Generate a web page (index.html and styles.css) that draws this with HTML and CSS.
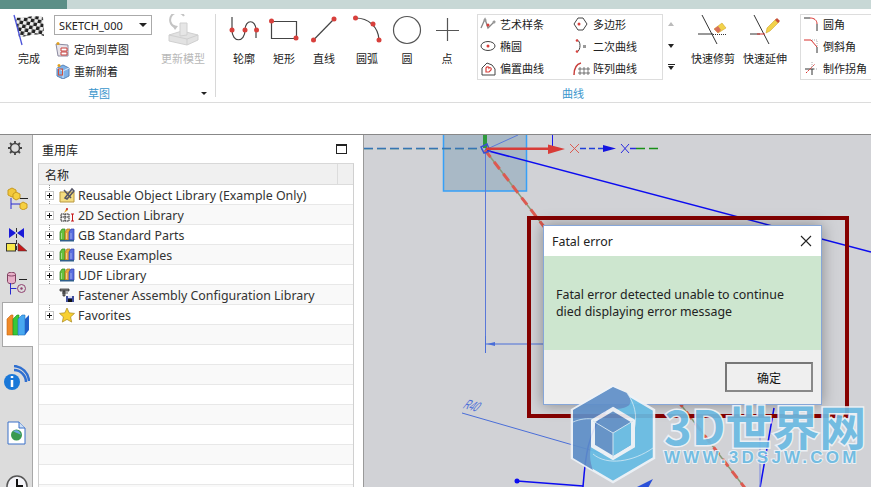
FILE: index.html
```html
<!DOCTYPE html>
<html lang="en">
<head>
    <meta charset="UTF-8">
    <meta name="viewport" content="width=device-width, initial-scale=1.0">
    <title>Fatal error</title>
    <link rel="stylesheet" href="styles.css">
</head>
<body>
    <svg class="defs" width="0" height="0">
        <pattern id="check" width="7" height="7" patternUnits="userSpaceOnUse" patternTransform="rotate(8) skewX(-6)">
            <rect width="7" height="7" fill="#eee"/>
            <rect width="3.500" height="3.500" fill="#222"/>
            <rect x="3.500" y="3.500" width="3.500" height="3.500" fill="#222"/>
        </pattern>
        <symbol id="books" viewBox="0 0 16 16">
            <path d="M1 5l2-3h3v11H1z" fill="#66c23c" stroke="#2f7f1c" stroke-width=".7"/>
            <path d="M6 5l2-3h3v11H6z" fill="#e8a83c" stroke="#a8741a" stroke-width=".7"/>
            <path d="M10 5l2-3h3v11h-5z" fill="#5b6fe0" stroke="#2f3da8" stroke-width=".7"/>
            <path d="M1 13h14v1.500H1z" fill="#2f5f8c"/>
            <path d="M2.500 6v6M7.500 6v6M12 6v6" stroke="#fff" stroke-width=".6" opacity=".7"/>
        </symbol>
        <symbol id="plus" viewBox="0 0 9 9">
            <rect x=".5" y=".5" width="8" height="8" fill="#fff" stroke="#c8c8c8"/>
            <path d="M2 4.500h5M4.500 2v5" stroke="#111"/>
        </symbol>
    </svg>

    <div class="top-strip"><div class="top-tab"></div></div>

    <div class="ribbon">
        <div class="group group-sketch">
            <div class="group-body">
                <div class="tool tool-flag">
                    <svg width="50" height="36" viewBox="4 14 50 36">
                        <path d="M15 17c8 3 13-3 28 0l1 19c-11-4-17 1-25 1z" fill="url(#check)"/>
                        <path d="M14 15l8 30" stroke="#4a52d8" stroke-width="1.300"/>
                    </svg>
                    <span>完成</span>
                </div>
                <div class="sketch-col">
                    <div class="select"><span>SKETCH_000</span><i class="caret"></i></div>
                    <div class="link-row">
                        <svg width="16" height="16" viewBox="0 0 16 16">
                            <path d="M1 3l12 1v11H3z" fill="#e8e4ea" stroke="#8a8aa0"/>
                            <path d="M6 7h6v3H6zM6 11h6v3H6z" fill="#fff" stroke="#c8403c"/>
                            <circle cx="3" cy="2.500" r="1.500" fill="#e0a020"/>
                        </svg>
                        <span>定向到草图</span>
                    </div>
                    <div class="link-row">
                        <svg width="16" height="16" viewBox="0 0 16 16">
                            <path d="M8 2l6 3v8l-6 3-6-3V5z" fill="#7fb2e8" stroke="#5a84b8"/>
                            <path d="M2 5l6 3 6-3M8 8v7" stroke="#dfeaf6" fill="none"/>
                            <rect x="3.500" y="6" width="4" height="6" fill="none" stroke="#d0503c"/>
                            <circle cx="4" cy="2.500" r="1.500" fill="#e0a020"/>
                        </svg>
                        <span>重新附着</span>
                    </div>
                </div>
                <div class="tool tool-update is-off">
                    <svg width="62" height="36" viewBox="152 14 62 36">
                        <path d="M169 35l13-4 16 4v5l-11 5-18-4z" fill="#e2e2e2" stroke="#d0d0d0"/>
                        <path d="M169 35l18 4 11-4M187 39v6" fill="none" stroke="#cfcfcf"/>
                        <path d="M180 23h7v12l-7 1z" fill="#e6e6e6" stroke="#d0d0d0"/>
                        <path d="M175 27a7.500 7.500 0 1 1 9-11" fill="none" stroke="#c4c4c4" stroke-width="2"/>
                        <path d="M172 25l6 1-3 4z" fill="#c4c4c4"/>
                    </svg>
                    <span>更新模型</span>
                </div>
            </div>
            <div class="group-foot">
                <div class="group-label label-sketch">草图</div>
                <i class="caret caret-small"></i>
            </div>
        </div>
        <div class="divider"></div>

        <div class="group">
            <div class="group-body body-curve">
                <div class="tool">
                    <svg width="40" height="36" viewBox="224 14 40 36">
                        <path d="M232 17v13c0 13 13 13 13 0 0-11 11-11 11 0v8" fill="none" stroke="#444" stroke-width="1.200"/>
                        <circle cx="232" cy="30" r="2.500" fill="#d8403c"/><circle cx="245" cy="30" r="2.500" fill="#d8403c"/><circle cx="256.500" cy="30" r="2.500" fill="#d8403c"/>
                    </svg>
                    <span>轮廓</span>
                </div>
                <div class="tool">
                    <svg width="40" height="36" viewBox="264 14 40 36">
                        <path d="M271.500 21.500h25v17h-25z" fill="none" stroke="#444" stroke-width="1.200"/>
                        <circle cx="271.500" cy="21" r="2.500" fill="#d8403c"/><circle cx="296" cy="38" r="2.500" fill="#d8403c"/>
                    </svg>
                    <span>矩形</span>
                </div>
                <div class="tool">
                    <svg width="40" height="36" viewBox="304 14 40 36">
                        <path d="M313.500 40l20.500-21" stroke="#444" stroke-width="1.200"/>
                        <circle cx="313.500" cy="40" r="2.500" fill="#d8403c"/><circle cx="334" cy="19" r="2.500" fill="#d8403c"/>
                    </svg>
                    <span>直线</span>
                </div>
                <div class="tool tool-arc">
                    <svg width="40" height="36" viewBox="347 14 40 36">
                        <path d="M355.500 18c13 0 23 9 23.500 22" fill="none" stroke="#444" stroke-width="1.200"/>
                        <circle cx="355.500" cy="18" r="2.500" fill="#d8403c"/><circle cx="373" cy="24" r="2.500" fill="#d8403c"/><circle cx="379" cy="40" r="2.500" fill="#d8403c"/>
                    </svg>
                    <span>圆弧</span>
                </div>
                <div class="tool">
                    <svg width="40" height="36" viewBox="387 14 40 36">
                        <circle cx="407" cy="30" r="13.500" fill="none" stroke="#555" stroke-width="1.200"/>
                    </svg>
                    <span>圆</span>
                </div>
                <div class="tool">
                    <svg width="40" height="36" viewBox="427 14 40 36">
                        <path d="M436 30.500h23M447.500 18v23" stroke="#555" stroke-width="1.200"/>
                    </svg>
                    <span>点</span>
                </div>

                <div class="gallery">
                    <div class="gallery-item">
                        <svg width="17" height="16" viewBox="0 0 17 16">
                            <path d="M1 12L5 3l3 9 7-7" fill="none" stroke="#888" stroke-width="1.300"/>
                            <circle cx="5" cy="4" r="1.500" fill="#999"/><circle cx="8" cy="9" r="1.500" fill="#d8403c"/><circle cx="14" cy="6" r="1.500" fill="#999"/>
                        </svg>
                        <span>艺术样条</span>
                    </div>
                    <div class="gallery-item">
                        <svg width="17" height="16" viewBox="0 0 17 16">
                            <path d="M5 2h5l4 6-4 6H5L1 8z" fill="none" stroke="#444"/>
                            <circle cx="6" cy="8" r="1.500" fill="#d8403c"/>
                        </svg>
                        <span>多边形</span>
                    </div>
                    <div class="gallery-item">
                        <svg width="17" height="16" viewBox="0 0 17 16">
                            <ellipse cx="8" cy="8" rx="7" ry="4.500" fill="none" stroke="#444"/>
                            <circle cx="8" cy="8" r="1.500" fill="#d8403c"/>
                        </svg>
                        <span>椭圆</span>
                    </div>
                    <div class="gallery-item">
                        <svg width="17" height="16" viewBox="0 0 17 16">
                            <path d="M4 2c4 1 4 10 0 12" fill="none" stroke="#444"/>
                            <circle cx="4" cy="2.500" r="1.300" fill="#d8403c"/><circle cx="4" cy="13.500" r="1.300" fill="#d8403c"/>
                            <rect x="10" y="7" width="3" height="3" fill="#999"/>
                        </svg>
                        <span>二次曲线</span>
                    </div>
                    <div class="gallery-item">
                        <svg width="17" height="16" viewBox="0 0 17 16">
                            <path d="M2 15V8l5-5 5 2 3 4v6z" fill="none" stroke="#444"/>
                            <path d="M6 12V8c1-2 3-1 3 0 1-1 3 0 2 2l-2 2z" fill="none" stroke="#d8403c" stroke-width="1.200"/>
                        </svg>
                        <span>偏置曲线</span>
                    </div>
                    <div class="gallery-item">
                        <svg width="17" height="16" viewBox="0 0 17 16">
                            <path d="M1 15C1 8 4 4 8 3" fill="none" stroke="#c8403c" stroke-width="1.500"/>
                            <path d="M6 8h2v2H6zM10 8h2v2h-2zM6 12h2v2H6zM10 12h2v2h-2zM14 8h2v2h-2zM14 12h2v2h-2z" fill="none" stroke="#555" stroke-width=".8"/>
                        </svg>
                        <span>阵列曲线</span>
                    </div>
                </div>
                <div class="gallery-scroll">
                    <i class="scroll-btn is-up"></i>
                    <i class="scroll-btn"></i>
                    <i class="scroll-btn is-more"></i>
                </div>

                <div class="tool tool-fast">
                    <svg width="52" height="36" viewBox="687 14 52 36">
                        <path d="M702 15l15 29M698 34h15" stroke="#333" fill="none"/>
                        <path d="M713 34.500h14" stroke="#333" stroke-dasharray="1 1"/>
                        <path d="M714 29l8-6 4 5-8 5z" fill="#f2d24a" stroke="#c89a20" stroke-width=".5"/>
                        <path d="M714 29l4-3 3 4-3 3z" fill="#d8705c"/>
                    </svg>
                    <span>快速修剪</span>
                </div>
                <div class="tool tool-fast">
                    <svg width="52" height="36" viewBox="739 14 52 36">
                        <path d="M754 15l15 29M750 34h10" stroke="#333" fill="none"/>
                        <path d="M757 34h8" stroke="#d8302c"/>
                        <path d="M766 33l1-5 9-9 3 3-9 9z" fill="#f2d24a" stroke="#c89a20" stroke-width=".5"/>
                        <path d="M775 20l2-2 3 3-2 2z" fill="#c8503c"/>
                    </svg>
                    <span>快速延伸</span>
                </div>

                <div class="corner-box">
                    <div class="gallery-item">
                        <svg width="17" height="16" viewBox="0 0 17 16">
                            <path d="M1 2h6" stroke="#333"/>
                            <path d="M7 2c4 0 7 2 7 6" fill="none" stroke="#d8302c"/>
                            <path d="M14 8v7" stroke="#333"/>
                        </svg>
                        <span>圆角</span>
                    </div>
                    <div class="gallery-item">
                        <svg width="17" height="16" viewBox="0 0 17 16">
                            <path d="M1 2h7" stroke="#d8302c"/>
                            <path d="M8 2l6 7" stroke="#d8302c"/>
                            <path d="M14 9v6" stroke="#333"/>
                            <path d="M9 2h5v6" fill="none" stroke="#aaa" stroke-dasharray="1 1"/>
                        </svg>
                        <span>倒斜角</span>
                    </div>
                    <div class="gallery-item">
                        <svg width="17" height="16" viewBox="0 0 17 16">
                            <path d="M2 9h9M9 9v6" stroke="#333"/>
                            <path d="M3 13l9-9" stroke="#d8302c" stroke-dasharray="2 1"/>
                            <path d="M11 9h4M9 2v6" stroke="#aaa" stroke-dasharray="1 1"/>
                        </svg>
                        <span>制作拐角</span>
                    </div>
                </div>
            </div>
            <div class="group-foot">
                <div class="group-label label-curve">曲线</div>
            </div>
        </div>
    </div>
    <div class="sub-bar"></div>

    <div class="main">
        <div class="side-tabs">
            <div class="tab tab-gear">
                <svg width="16" height="16" viewBox="0 0 16 16">
                    <circle cx="8" cy="8" r="4.500" fill="none" stroke="#444" stroke-width="1.500"/>
                    <path d="M8 1v3M8 12v3M1 8h3M12 8h3M3 3l2 2M11 11l2 2M13 3l-2 2M5 11l-2 2" stroke="#444" stroke-width="1.800"/>
                </svg>
            </div>
            <div class="tab tab-parts">
                <svg width="22" height="23" viewBox="0 0 22 23">
                    <path d="M1 3l4-2 4 2v5L5 10 1 8z" fill="#f2c83c" stroke="#c89a20"/>
                    <path d="M6 7l3-2 4 2v4l-4 2-3-2z" fill="#f6d040" stroke="#c89a20"/>
                    <path d="M13 17l3-2 4 2v4l-4 2-3-2z" fill="#f6d040" stroke="#c89a20"/>
                    <path d="M4 11v11M4 17h9" stroke="#2a2ad0"/>
                    <path d="M13 11.500h8" stroke="#222"/>
                </svg>
            </div>
            <div class="tab tab-constraint">
                <svg width="22" height="24" viewBox="0 0 22 24">
                    <path d="M3 0l7 5-7 5zM18 0l-7 5 7 5z" fill="#1a1ad8"/>
                    <rect x=".5" y="15.500" width="9" height="7.500" fill="#f8e848" stroke="#333"/>
                    <path d="M12 15l9 8h-9z" fill="#c81818" stroke="#333" stroke-width=".5"/>
                    <path d="M10.500 0v23" stroke="#333" stroke-dasharray="4 2"/>
                </svg>
            </div>
            <div class="tab tab-db">
                <svg width="22" height="23" viewBox="0 0 22 23">
                    <path d="M1.500 2.500c0-3 8-3 8 0v7c0 3-8 3-8 0z" fill="#e8b0c8" stroke="#804060"/>
                    <path d="M1.500 2.500c0 2 8 2 8 0" fill="none" stroke="#804060"/>
                    <path d="M4.500 11v11.500M4.500 16.500h6" stroke="#2a2ad0"/>
                    <path d="M13 7.500h8" stroke="#222"/>
                    <circle cx="15.500" cy="16.500" r="4" fill="none" stroke="#904070"/>
                    <circle cx="15.500" cy="16.500" r="1.200" fill="#904070"/>
                </svg>
            </div>
            <div class="tab tab-active">
                <svg width="24" height="22" viewBox="0 0 24 22">
                    <path d="M1 5l4-4h2v20H1z" fill="#f08a28" stroke="#c86410" stroke-width=".6"/>
                    <path d="M7 5l4-4h2v20H7z" fill="#38c838" stroke="#1c8c1c" stroke-width=".6"/>
                    <path d="M12 5l4-4h3v20h-7z" fill="#48a8f0" stroke="#2070c0" stroke-width=".6"/>
                    <path d="M19 21l4-5V1l-4 4z" fill="#2060c8"/>
                </svg>
            </div>
            <div class="tab tab-info">
                <svg width="26" height="26" viewBox="0 0 26 26">
                    <path d="M10 5a12 12 0 0 1 12 12" fill="none" stroke="#2f6fd0" stroke-width="2.500"/>
                    <path d="M10 1a16 16 0 0 1 15 15" fill="none" stroke="#2f6fd0" stroke-width="2.500"/>
                    <circle cx="8" cy="17" r="8" fill="#1a78d8"/>
                    <path d="M8 11v2M8 15v7" stroke="#fff" stroke-width="2.500"/>
                </svg>
            </div>
            <div class="tab tab-web">
                <svg width="20" height="24" viewBox="0 0 20 24">
                    <path d="M1 1h11l6 6v16H1z" fill="#fff" stroke="#3a70c8"/>
                    <path d="M12 1v6h6" fill="#cfe0f4" stroke="#3a70c8"/>
                    <circle cx="9.500" cy="14" r="5.500" fill="#3a9a50"/>
                    <path d="M6 10c4-2 7 0 8 4-3-2-5-2-8-4z" fill="#6aa8e0"/>
                </svg>
            </div>
            <div class="tab tab-clock">
                <svg width="22" height="22" viewBox="0 0 22 22">
                    <circle cx="11" cy="11" r="10" fill="#f4f4f8" stroke="#555" stroke-width="1.500"/>
                    <path d="M11 4v7h6" fill="none" stroke="#111" stroke-width="2"/>
                </svg>
            </div>
        </div>

        <div class="panel">
            <div class="panel-title">
                <span>重用库</span>
                <i class="max-btn"></i>
            </div>
            <div class="lib-table">
                <div class="lib-head">
                    <div class="lib-head-name">名称</div>
                    <div class="lib-head-end"></div>
                </div>
                <div class="tree-rows">
                    <div class="tree-line"></div>
                    <div class="lib-row">
                        <svg class="expander"><use href="#plus"/></svg>
                        <svg class="lib-icon" viewBox="0 0 16 16">
                            <path d="M1 5h14v10H1z" fill="#f4dc80" stroke="#b89840"/>
                            <path d="M6 11l7-9 2 2-7 8zM5 3l7 8" stroke="#556" stroke-width="1.500" fill="none"/>
                        </svg>
                        <span>Reusable Object Library (Example Only)</span>
                    </div>
                    <div class="lib-row">
                        <svg class="expander"><use href="#plus"/></svg>
                        <svg class="lib-icon" viewBox="0 0 16 16">
                            <path d="M2 7h8v7H2zM6 7v7M2 10h8" fill="none" stroke="#222" stroke-dasharray="1.500 .5"/>
                            <path d="M12 7h3M12 14h3M13.500 7v7" stroke="#c81818"/>
                            <path d="M5 6l2-4 2 1z" fill="#e0a020"/><circle cx="8" cy="2" r="1" fill="#c81818"/>
                        </svg>
                        <span>2D Section Library</span>
                    </div>
                    <div class="lib-row">
                        <svg class="expander"><use href="#plus"/></svg>
                        <svg class="lib-icon"><use href="#books"/></svg>
                        <span>GB Standard Parts</span>
                    </div>
                    <div class="lib-row">
                        <svg class="expander"><use href="#plus"/></svg>
                        <svg class="lib-icon"><use href="#books"/></svg>
                        <span>Reuse Examples</span>
                    </div>
                    <div class="lib-row">
                        <svg class="expander"><use href="#plus"/></svg>
                        <svg class="lib-icon"><use href="#books"/></svg>
                        <span>UDF Library</span>
                    </div>
                    <div class="lib-row">
                        <svg class="expander is-empty"></svg>
                        <svg class="lib-icon" viewBox="0 0 16 16">
                            <path d="M1 2h9v2H1zM4 4h2v5H4zM3 6h6" fill="#888" stroke="#222" stroke-width=".7"/>
                            <path d="M7 9h8v6H7z" fill="#3c4c9c"/><path d="M9 9h4v2H9z" fill="#dde"/><path d="M9 12h4v3H9z" fill="#111"/>
                        </svg>
                        <span>Fastener Assembly Configuration Library</span>
                    </div>
                    <div class="lib-row">
                        <svg class="expander"><use href="#plus"/></svg>
                        <svg class="lib-icon" viewBox="0 0 16 16">
                            <path d="M8 1l2.200 4.800 5.300.6-3.900 3.500 1.100 5.200L8 12.400l-4.700 2.700 1.100-5.200L.5 6.400l5.300-.6z" fill="#f8d030" stroke="#a88820" stroke-width=".7"/>
                        </svg>
                        <span>Favorites</span>
                    </div>
                    <div class="lib-row"></div><div class="lib-row"></div><div class="lib-row"></div>
                    <div class="lib-row"></div><div class="lib-row"></div><div class="lib-row"></div>
                    <div class="lib-row"></div><div class="lib-row"></div><div class="lib-row"></div>
                </div>
            </div>
        </div>

        <div class="canvas">
            <svg class="drawing" width="508" height="352" viewBox="363 135 508 352">
                <rect x="443.500" y="130" width="83" height="61" fill="#a9b9c6" stroke="#36a0f8" stroke-width="1.500"/>
                <path d="M485 150l33-15" stroke="#5a7ad8"/>
                <path d="M552.500 135v15" stroke="#1a1af0"/>
                <path d="M485.500 148v204" stroke="#5a78d8"/>
                <path d="M485 150L871 252" stroke="#0c0cf0" stroke-width="1.500"/>
                <path d="M364 148.500h118" stroke="#2a6ac8" stroke-width="1.500" stroke-dasharray="9 4"/>
                <path d="M364 149h118" stroke="#5a9a70" stroke-width="1" stroke-dasharray="9 4" opacity=".5"/>
                <path d="M485 135v13" stroke="#2e9a3c" stroke-width="4"/>
                <path d="M485 150L748 492" stroke="#8a9a78" stroke-width="1.500"/>
                <path d="M485 150L748 492" stroke="#dc5a50" stroke-width="3" stroke-dasharray="9 6"/>
                <path d="M481 147l6-3 3 7-6 2z" fill="none" stroke="#3a50d0" stroke-width="1.500"/>
                <path d="M486 147.500h62v-3l17 4.500-17 5v-4h-62z" fill="#d83c38"/>
                <path d="M570 144l9 9M579 144l-9 9" stroke="#dc5a50"/>
                <path d="M580 148.500h23" stroke="#2040d8" stroke-width="1.500" stroke-dasharray="6 3"/>
                <path d="M603 145l13 3.500-13 3.500z" fill="#1414e0"/>
                <path d="M621 144l8 9M629 144l-8 9" stroke="#2a2ae0"/>
                <path d="M630 148.500h6" stroke="#2a2ae0" stroke-width="1.500"/>
                <path d="M636 148.500h24" stroke="#189018" stroke-width="1.500" stroke-dasharray="9 4"/>

                <path d="M485.500 336v17M486 344h60" stroke="#4a6ed8"/>
                <path d="M487 344l8-2v4z" fill="#4a6ed8"/>
                <path d="M462 413l142 41" stroke="#4a6ed8"/>
                <text class="dim-text" transform="translate(462 408) rotate(14) skewX(-25) scale(.72 1.300)">R40</text>
                <path d="M517 481l66 5" stroke="#0c0cf0" stroke-width="1.500"/>
                <circle cx="517" cy="481" r="2.500" fill="#0c0cf0"/>
                <path d="M583 487c2-26 4-56 23-76" fill="none" stroke="#0c0cf0" stroke-width="1.500"/>
                <path d="M774 408l-14 80" stroke="#0c0cf0" stroke-width="1.500"/>
                <path d="M760 430v57" stroke="#7a8ae0"/>
                <path d="M635 488l18-9-5 9z" fill="#2a50d8"/>
            </svg>

            <div class="highlight-frame"></div>

            <div class="dialog">
                <div class="dialog-title">
                    <span>Fatal error</span>
                    <svg class="dialog-close" width="12" height="12" viewBox="0 0 12 12">
                        <path d="M1 1l10 10M11 1L1 11" stroke="#222" stroke-width="1.100"/>
                    </svg>
                </div>
                <div class="dialog-body">
                    Fatal error detected unable to continue<br>died displaying error message
                </div>
                <div class="dialog-foot">
                    <button class="dialog-btn">确定</button>
                </div>
            </div>

            <div class="watermark">
                <svg class="wm-logo" width="88" height="100" viewBox="0 0 88 100">
                    <path d="M44 2l41 24v48L44 98 3 74V26z" fill="#66bce4" stroke="#eef3f8" stroke-width="2.500"/>
                    <path d="M44 3L4 26v48l20 12C18 70 20 50 44 25c16 0 22-5 14-16z" fill="#5f8fc8"/>
                    <path d="M4 38c14-6 30-4 42 8M24 70c14 12 40 8 60-6M58 9c10 14 12 30 2 50" fill="none" stroke="#d8ecf6" stroke-width=".8"/>
                    <path d="M44 25l20 12v25L44 74 24 62V37z" fill="#5f8fc6" stroke="#eef3f8" stroke-width="4"/>
                    <path d="M44 49l18-11v23L44 72z" fill="#66bce4"/>
                    <path d="M24 37l20 12 20-12M44 49v25" fill="none" stroke="#cfe4f2"/>
                </svg>
                <div class="wm-text">
                    <div class="wm-name">3D世界网</div>
                    <div class="wm-url">WWW.3DSJW.COM</div>
                </div>
            </div>
        </div>
    </div>
</body>
</html>
```

FILE: styles.css
```css
* {
    margin: 0;
    padding: 0;
    box-sizing: border-box;
}

body {
    width: 871px;
    height: 487px;
    overflow: hidden;
    background: #fff;
    color: #222;
    font-family: "Noto Sans", "Noto Sans CJK SC", sans-serif;
}

.defs {
    position: absolute;
}

i {
    display: block;
}

/* Title strip */
.top-strip {
    height: 9px;
    background: #c8d8d6;
}

.top-tab {
    width: 67px;
    height: 9px;
    background: #5c8f87;
}

/* Ribbon */
.ribbon {
    display: flex;
    height: 94px;
    padding-top: 5px;
    overflow: hidden;
    border-bottom: 1px solid #dcdcdc;
    font-family: "Noto Sans CJK SC", sans-serif;
    font-size: 11px;
}

.group {
    flex: none;
}

.group-sketch {
    width: 215px;
}

.group-body {
    display: flex;
    height: 72px;
}

.group-foot {
    display: flex;
    align-items: center;
    height: 14px;
}

.group-label {
    color: #3a96cc;
    text-align: center;
}

.label-sketch {
    width: 198px;
}

.label-curve {
    width: 714px;
}

.divider {
    flex: none;
    width: 1px;
    height: 83px;
    background: #d8d8d8;
}

.tool {
    flex: none;
    display: flex;
    flex-direction: column;
    align-items: center;
    width: 40px;
    line-height: 16px;
}

.tool svg {
    display: block;
}

.body-curve {
    padding-left: 8px;
}

.tool-flag {
    width: 50px;
    margin-left: 4px;
}

.tool-update {
    width: 62px;
}

.is-off {
    color: #b8b8b8;
}

.tool-arc {
    margin-left: 3px;
}

.tool-fast {
    width: 52px;
}

.sketch-col {
    flex: none;
    width: 98px;
}

.select {
    display: flex;
    align-items: center;
    justify-content: space-between;
    height: 20px;
    margin-top: 1px;
    margin-bottom: 3px;
    padding: 0 4px;
    border: 1px solid #aaa;
    font-family: "Noto Sans", sans-serif;
}

.caret {
    width: 0;
    height: 0;
    border-left: 4px solid transparent;
    border-right: 4px solid transparent;
    border-top: 4px solid #222;
}

.caret-small {
    margin-left: 3px;
    border-left-width: 3px;
    border-right-width: 3px;
    border-top-width: 3px;
}

.link-row {
    display: flex;
    align-items: center;
    gap: 3px;
    height: 22px;
    padding-left: 1px;
}

.gallery {
    flex: none;
    display: grid;
    grid-template-columns: 93px 1fr;
    grid-auto-rows: 22px;
    width: 186px;
    height: 66px;
    margin-left: 10px;
    border: 1px solid #ddd;
}

.gallery-item {
    display: flex;
    align-items: center;
    gap: 3px;
    padding-left: 2px;
    padding-bottom: 4px;
    white-space: nowrap;
}

.gallery-scroll {
    flex: none;
    display: flex;
    flex-direction: column;
    align-items: center;
    width: 16px;
    margin-right: 8px;
}

.scroll-btn {
    width: 0;
    height: 0;
    margin-top: 18px;
    border-left: 3px solid transparent;
    border-right: 3px solid transparent;
    border-top: 4px solid #222;
}

.scroll-btn.is-up {
    margin-top: 8px;
    border-top: 0;
    border-bottom: 4px solid #bbb;
}

.scroll-btn.is-more {
    position: relative;
}

.scroll-btn.is-more::before {
    content: "";
    position: absolute;
    left: -3px;
    top: -6px;
    width: 7px;
    height: 1px;
    background: #222;
}

.corner-box {
    flex: none;
    display: grid;
    grid-auto-rows: 22px;
    width: 100px;
    height: 66px;
    margin-left: 9px;
    border: 1px solid #ddd;
}

.sub-bar {
    height: 32px;
    border-bottom: 1px solid #888;
}

/* Main area */
.main {
    display: flex;
    height: 352px;
    overflow: hidden;
}

.side-tabs {
    flex: none;
    width: 33px;
    padding-left: 2px;
    background: #dcdcdc;
    border-right: 1px solid #a8a8a8;
}

.tab {
    display: flex;
    align-items: center;
    justify-content: center;
    width: 30px;
}

.tab-gear {
    height: 27px;
    padding-right: 4px;
    padding-bottom: 2px;
}

.tab-parts {
    height: 44px;
    margin-top: 14px;
    padding-left: 2px;
}

.tab-constraint {
    height: 40px;
}

.tab-db {
    height: 42px;
    padding-top: 4px;
}

.tab-active {
    width: 31px;
    height: 45px;
    background: #fff;
    border: 1px solid #a8a8a8;
    border-right: 0;
}

.tab-info {
    height: 62px;
}

.tab-web {
    height: 47px;
}

.tab-clock {
    height: 60px;
}

.panel {
    flex: none;
    width: 330px;
    padding-left: 5px;
    background: #fff;
}

.panel-title {
    display: flex;
    align-items: center;
    justify-content: space-between;
    height: 28px;
    padding: 0 16px 0 4px;
    font-family: "Noto Sans CJK SC", sans-serif;
    font-size: 12px;
}

.max-btn {
    width: 11px;
    height: 10px;
    border: 1px solid #222;
    border-top-width: 2px;
}

.lib-table {
    width: 316px;
    border-left: 1px solid #d0d0d0;
    border-right: 1px solid #d0d0d0;
    border-top: 1px solid #d8d8d8;
}

.lib-head {
    display: flex;
    height: 21px;
    background: #f0f0f0;
    border-bottom: 1px solid #dcdcdc;
    font-family: "Noto Sans CJK SC", sans-serif;
    font-size: 12px;
    line-height: 22px;
}

.lib-head-name {
    flex: 1;
    padding-left: 6px;
    border-right: 1px solid #dcdcdc;
}

.lib-head-end {
    width: 15px;
}

.tree-rows {
    position: relative;
}

.tree-line {
    position: absolute;
    left: 10px;
    top: 0;
    height: 131px;
    border-left: 1px dotted #888;
}

.lib-row {
    position: relative;
    display: flex;
    align-items: center;
    height: 20px;
    padding-top: 1px;
    padding-left: 6px;
    border-bottom: 1px solid #e8e8e8;
    font-size: 12.400px;
    color: #333;
    white-space: nowrap;
}

.lib-row:nth-child(odd) {
    background: #f9f9f9;
}

.expander {
    flex: none;
    width: 9px;
    height: 9px;
}

.expander.is-empty {
    visibility: hidden;
}

.lib-icon {
    flex: none;
    width: 16px;
    height: 16px;
    margin: 0 3px 0 5px;
}

/* Canvas */
.canvas {
    position: relative;
    flex: 1;
    background: #d1d2d6;
    border-left: 1px solid #999;
}

.drawing {
    position: absolute;
    left: -1px;
    top: 0;
}

.dim-text {
    fill: #4a6ed8;
    font-family: "Liberation Sans", sans-serif;
    font-size: 11px;
}

.highlight-frame {
    position: absolute;
    left: 163px;
    top: 81px;
    width: 322px;
    height: 202px;
    border: 4px solid #850000;
}

.dialog {
    position: absolute;
    left: 179px;
    top: 90px;
    display: flex;
    flex-direction: column;
    width: 279px;
    height: 180px;
    background: #efefef;
    border: 1px solid #86a6d8;
    box-shadow: 0 0 14px rgba(0, 0, 0, 0.35);
    font-size: 12.400px;
    color: #222;
}

.dialog-title {
    display: flex;
    align-items: center;
    justify-content: space-between;
    flex: none;
    height: 30px;
    padding: 0 9px 0 8px;
    background: #fff;
}

.dialog-body {
    flex: none;
    height: 94px;
    padding-top: 30px;
    padding-left: 12px;
    background: #cde6cf;
    line-height: 17px;
}

.dialog-foot {
    display: flex;
    justify-content: flex-end;
    padding: 12px 8px 0 0;
}

.dialog-btn {
    width: 88px;
    height: 30px;
    background: #efefef;
    border: 2px solid;
    border-color: #777 #888 #888 #777;
    font-family: "Noto Sans CJK SC", sans-serif;
    font-size: 12px;
    color: #111;
}

/* Watermark */
.watermark {
    position: absolute;
    left: 205px;
    top: 249px;
    display: flex;
    gap: 7px;
    opacity: 0.92;
}

.wm-logo {
    flex: none;
}

.wm-text {
    padding-top: 18px;
    font-weight: 700;
    color: #6cbbe3;
    white-space: nowrap;
    paint-order: stroke fill;
    -webkit-text-stroke: 3px #eef3f8;
}

.wm-name {
    font-family: "Noto Sans CJK SC", sans-serif;
    font-size: 47px;
    line-height: 46px;
}

.wm-url {
    margin-top: 1px;
    font-family: "Liberation Sans", sans-serif;
    font-size: 17px;
    line-height: 17px;
    letter-spacing: 3.200px;
    -webkit-text-stroke-width: 2px;
}
```
